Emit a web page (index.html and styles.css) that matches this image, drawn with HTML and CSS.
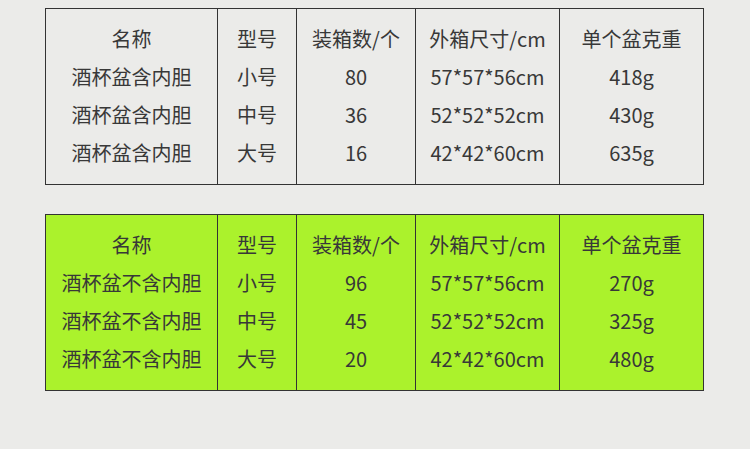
FILE: index.html
```html
<!DOCTYPE html>
<html lang="zh">
<head>
<meta charset="utf-8">
<link rel="stylesheet" href="styles.css">
</head>
<body>
<div class="page">
  <table class="spec">
    <colgroup><col class="c1"><col class="c2"><col class="c3"><col class="c4"><col class="c5"></colgroup>
    <tr class="first"><td>名称</td><td>型号</td><td>装箱数/个</td><td>外箱尺寸/cm</td><td>单个盆克重</td></tr>
    <tr><td>酒杯盆含内胆</td><td>小号</td><td>80</td><td>57*57*56cm</td><td>418g</td></tr>
    <tr><td>酒杯盆含内胆</td><td>中号</td><td>36</td><td>52*52*52cm</td><td>430g</td></tr>
    <tr class="last"><td>酒杯盆含内胆</td><td>大号</td><td>16</td><td>42*42*60cm</td><td>635g</td></tr>
  </table>
  <table class="spec green">
    <colgroup><col class="c1"><col class="c2"><col class="c3"><col class="c4"><col class="c5"></colgroup>
    <tr class="first"><td>名称</td><td>型号</td><td>装箱数/个</td><td>外箱尺寸/cm</td><td>单个盆克重</td></tr>
    <tr><td>酒杯盆不含内胆</td><td>小号</td><td>96</td><td>57*57*56cm</td><td>270g</td></tr>
    <tr><td>酒杯盆不含内胆</td><td>中号</td><td>45</td><td>52*52*52cm</td><td>325g</td></tr>
    <tr class="last"><td>酒杯盆不含内胆</td><td>大号</td><td>20</td><td>42*42*60cm</td><td>480g</td></tr>
  </table>
</div>
</body>
</html>
```
FILE: styles.css
```css
html, body {
  margin: 0;
  padding: 0;
  background: #ebebe9;
}
.page {
  padding-top: 8px;
  padding-left: 45px;
  display: flex;
  flex-direction: column;
  gap: 29px;
}
.spec {
  border-collapse: collapse;
  width: 658px;
  table-layout: fixed;
  border: 1px solid #333333;
  background: #ebebe9;
  font-family: "Noto Sans CJK SC", "Noto Sans", sans-serif;
  font-size: 20px;
  color: #383838;
}
.spec.green {
  background: #abf22c;
}
.c1 { width: 172px; }
.c2 { width: 79px; }
.c3 { width: 119px; }
.c4 { width: 144px; }
.c5 { width: 144px; }
.spec td {
  border-left: 1px solid #333333;
  border-right: 1px solid #333333;
  padding: 0;
  height: 38px;
  line-height: 38px;
  text-align: center;
  white-space: nowrap;
}
.spec tr.first td {
  padding-top: 11px;
}
.spec tr.last td {
  padding-bottom: 12px;
}
```
